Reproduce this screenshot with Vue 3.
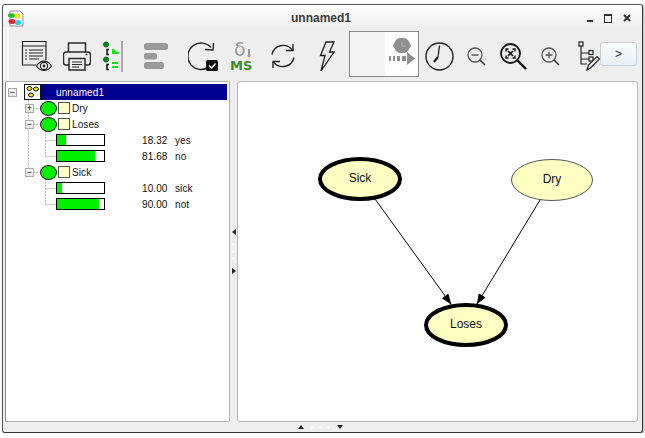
<template>
  <div class="window">
    <header class="titlebar">
      <svg class="app-icon" width="17" height="17" viewBox="0 0 17 17">
        <path d="M3 1h10l3 3v12H3z" fill="#f4f4f4" stroke="#999" />
        <ellipse cx="4.500" cy="5.500" rx="3.500" ry="2.300" fill="#1fc01f" />
        <ellipse cx="10.500" cy="6" rx="3" ry="2.500" fill="#f2e21c" />
        <ellipse cx="5" cy="11.500" rx="3.500" ry="2.500" fill="#e8202a" />
        <ellipse cx="11" cy="12.500" rx="3" ry="2.500" fill="#22d5e0" />
      </svg>
      <span class="title">unnamed1</span>
      <div class="win-controls">
        <span class="win-min"></span>
        <span class="win-max"></span>
        <svg width="8" height="8" viewBox="0 0 8 8"><path d="M1 1l6 6M7 1L1 7" stroke="#333" stroke-width="2" /></svg>
      </div>
    </header>

    <div class="toolbar">
      <svg width="32" height="32" viewBox="0 0 32 32" fill="none" stroke="#222">
        <path d="M25 20V1.500H1.500V25H15" stroke-width="1.200" />
        <path d="M1.500 6h23.500" stroke-width="1.200" />
        <path d="M4 10h2M8 10h14M4 13h2M8 13h14M4 16h2M8 16h14M4 19h2M8 19h10" />
        <path d="M15.500 26c4-6.500 11-6.500 15 0-4 6-11 6-15 0z" fill="#eee" stroke-width="1.200" />
        <circle cx="23" cy="26" r="3.600" stroke-width="1.200" />
        <circle cx="23" cy="26" r="1.400" fill="#222" stroke="none" />
      </svg>
      <svg width="28" height="29" viewBox="0 0 28 29" fill="none" stroke="#2b2b2b" stroke-width="1.500">
        <path d="M5.500 10V1h17v9" />
        <path d="M6 23H3a2.500 2.500 0 0 1-2.500-2.500v-8A2.500 2.500 0 0 1 3 10h22a2.500 2.500 0 0 1 2.500 2.500v8A2.500 2.500 0 0 1 25 23h-3" />
        <rect x="6" y="16.500" width="16" height="11.500" />
        <path d="M9 20h10M9 22.500h10M9 25h7" stroke-width="1" />
        <circle cx="23.500" cy="12.500" r="1" fill="#2b2b2b" stroke="none" />
      </svg>
      <svg width="24" height="31" viewBox="0 0 24 31">
        <circle cx="6" cy="3.500" r="2.500" fill="#0a8a0a" stroke="#063" />
        <circle cx="6" cy="18.500" r="2.500" fill="#0a8a0a" stroke="#063" />
        <path d="M9 8.500H7v5h2M9 23.500H7v5h2" fill="none" stroke="#111" stroke-width="1.500" />
        <path d="M12 8h2l3 3h2v2h-7zM12 21h6v2h-6zM12 25h6v2h-6z" fill="#14e614" />
        <rect x="21" y="0" width="2" height="31" fill="#aaa" />
      </svg>
      <svg width="24" height="26" viewBox="0 0 24 26" fill="#9a9a9a">
        <rect x="0" y="0" width="24" height="7" rx="2.500" />
        <rect x="0" y="10" width="13" height="6.500" rx="2.500" />
        <rect x="0" y="19" width="20" height="7" rx="2.500" />
      </svg>
      <svg width="30" height="29" viewBox="0 0 30 29">
        <path d="M23 5.500A13.200 13.200 0 1 0 19 26" fill="none" stroke="#222" stroke-width="1.400" />
        <path d="M17 7.500l8 .5.500-7" fill="none" stroke="#222" stroke-width="1.400" />
        <rect x="18" y="18" width="12" height="11" rx="1.500" fill="#111" />
        <path d="M21 23.500l2.500 2.500 4-4.500" fill="none" stroke="#fff" stroke-width="1.300" />
      </svg>
      <svg width="32" height="44" viewBox="0 0 32 44">
        <text x="9" y="22" class="delta-text">δ</text>
        <path d="M23 15h2v5.500a1.500 1.500 0 1 1-2 0z" fill="#999" />
        <text x="5" y="36" class="ms-text">MS</text>
      </svg>
      <svg width="26" height="26" viewBox="0 0 26 26" fill="none" stroke="#222" stroke-width="1.400">
        <path d="M2 11.500A11.500 11.500 0 0 1 22 6.500" />
        <path d="M24 14.500A11.500 11.500 0 0 1 4 19.500" />
        <path d="M23 1v6.500h-7M3 25v-6.500h7" />
      </svg>
      <svg width="16" height="31" viewBox="0 0 16 31" fill="none" stroke="#1c1c1c" stroke-width="1.300" stroke-linejoin="miter">
        <path d="M7 1h8l-4.500 10H15L2 30l4-15.500H1.500z" />
      </svg>
      <div class="slider-box">
        <div class="slider-left"></div>
        <div class="slider-right">
          <svg width="28" height="32" viewBox="0 0 28 32" fill="#8f8f8f">
            <path d="M8 2l3-2h6l3 2 3 5.500-3 5.500-3 2h-6l-3-2-3-5.500z" />
            <path d="M14 4v4h4" fill="none" stroke="#b5b5b5" />
            <path d="M1 18h2v5H1zM5 18h2v5H5zM9 18h3v5H9zM14 18h4v5h-4zM19 14l8 6.500-8 6.500z" />
          </svg>
        </div>
      </div>
      <svg width="29" height="29" viewBox="0 0 29 29" fill="none" stroke="#222">
        <circle cx="14.500" cy="14.500" r="13.500" stroke-width="1.400" />
        <path d="M13 15L14.500 3.500" stroke-width="1.300" />
        <path d="M13 15L9 20" stroke-width="2.200" />
      </svg>
      <svg width="19" height="19" viewBox="0 0 19 19" fill="none" stroke="#555">
        <circle cx="8" cy="8" r="7" stroke-width="1.300" />
        <path d="M4.500 8h7" stroke-width="1.300" />
        <path d="M13 13l5 5" stroke="#333" stroke-width="1.600" />
      </svg>
      <svg width="27" height="27" viewBox="0 0 27 27" fill="none" stroke="#111">
        <circle cx="10.500" cy="10.500" r="9.500" stroke-width="1.800" />
        <path d="M8 8l5 5M13 8l-5 5" stroke-width="1.600" />
        <path d="M6 8.500V6h2.500M12.500 6H15v2.500M15 12.500V15h-2.500M8.500 15H6v-2.500" stroke-width="1.400" />
        <path d="M17.500 17.500L26 26" stroke-width="2.400" />
      </svg>
      <svg width="19" height="19" viewBox="0 0 19 19" fill="none" stroke="#555">
        <circle cx="8" cy="8" r="7" stroke-width="1.300" />
        <path d="M4.500 8h7M8 4.500v7" stroke-width="1.300" />
        <path d="M13 13l5 5" stroke="#333" stroke-width="1.600" />
      </svg>
      <svg class="tree-edit" width="22" height="30" viewBox="0 0 22 30" fill="none" stroke="#222" stroke-width="1.200">
        <rect x="1" y="1" width="4" height="4" fill="#eee" />
        <path d="M3 5v18h6M3 12h8M3 18h8" />
        <rect x="11" y="9.500" width="4" height="4" fill="#eee" />
        <rect x="11" y="16" width="4" height="4" fill="#eee" />
        <path d="M9 29l1.500-5L19 15.500l2.500 2.500-8.500 8.500z" fill="#eee" />
      </svg>
      <button class="more-btn">&gt;</button>
    </div>

    <main class="content">
      <section class="tree-panel">
        <svg class="tree-lines" width="224" height="140" viewBox="6 82 224 140">
          <path d="M28.500 100v72M33 108.500h7M33 124.500h7M33 172.500h7M45.500 131v25.500M45.500 140.500H56M45.500 156.500H56M45.500 179v25.500M45.500 188.500H56M45.500 204.500H56" fill="none" stroke="#bbb" stroke-dasharray="2 1" />
        </svg>
        <div class="row root-row">
          <span class="expander">−</span>
          <div class="root-selected">
            <svg class="root-icon" width="17" height="16" viewBox="0 0 17 16">
              <rect x=".5" y=".5" width="16" height="15" fill="#fff" stroke="#111" />
              <ellipse cx="5.500" cy="4.500" rx="2.500" ry="2" fill="#f2e21c" stroke="#111" />
              <ellipse cx="12" cy="5" rx="2.500" ry="2" fill="#f2e21c" stroke="#111" />
              <ellipse cx="7" cy="11" rx="2.500" ry="2" fill="#f2e21c" stroke="#111" />
            </svg>
            <span>unnamed1</span>
          </div>
        </div>
        <template v-for="row in rows" :key="row.key">
          <div v-if="row.name" class="row node-row">
            <span class="expander">{{ row.open ? "−" : "+" }}</span>
            <span class="node-oval"></span>
            <span class="node-box"></span>
            <span class="node-name">{{ row.name }}</span>
          </div>
          <div v-else class="row state-row">
            <span class="bar"><span class="bar-fill" :style="{ width: row.value + '%' }"></span></span>
            <span class="state-value">{{ row.value.toFixed(2) }}</span>
            <span>{{ row.label }}</span>
          </div>
        </template>
      </section>

      <div class="v-split">
        <span class="tri-left"></span>
        <span class="dots-v"><i></i><i></i><i></i></span>
        <span class="tri-right"></span>
      </div>

      <section class="graph-panel">
        <svg class="graph" width="399" height="340" viewBox="238 82 399 340">
          <defs>
            <marker id="head" markerWidth="11" markerHeight="10" refX="10" refY="4" orient="auto" markerUnits="userSpaceOnUse">
              <path d="M0 0L10.500 4L0 8z" fill="#000" />
            </marker>
          </defs>
          <path d="M375 199L451 304" stroke="#000" marker-end="url(#head)" />
          <path d="M540 200L477 304" stroke="#000" marker-end="url(#head)" />
          <ellipse cx="360" cy="179" rx="40" ry="20" class="node-fill" stroke="#000" stroke-width="4" />
          <ellipse cx="552" cy="180" rx="40.500" ry="20.500" class="node-fill" stroke="#555" />
          <ellipse cx="466" cy="325" rx="40" ry="20" class="node-fill" stroke="#000" stroke-width="4" />
          <text x="360" y="182" class="graph-text">Sick</text>
          <text x="552" y="183" class="graph-text">Dry</text>
          <text x="466" y="328" class="graph-text">Loses</text>
        </svg>
      </section>
    </main>

    <div class="h-split">
      <span class="tri-up"></span>
      <span class="dots-h"><i></i><i></i><i></i></span>
      <span class="tri-down"></span>
    </div>
  </div>
</template>

<script setup>
const rows = [
  { key: "dry", name: "Dry", open: false },
  { key: "loses", name: "Loses", open: true },
  { key: "yes", value: 18.32, label: "yes" },
  { key: "no", value: 81.68, label: "no" },
  { key: "sick", name: "Sick", open: true },
  { key: "s1", value: 10, label: "sick" },
  { key: "s2", value: 90, label: "not" },
];
</script>

<style>
html,
body {
  background: #fff;
}
</style>

<style scoped>
.window {
  width: 641px;
  height: 429px;
  margin: 4px 0 0 2px;
  box-sizing: border-box;
  border: 1px solid #555;
  border-right-color: #333;
  border-bottom-color: #333;
  border-radius: 3px;
  background: #eeeeee;
  box-shadow: 1px 1px 3px rgba(0, 0, 0, 0.35);
  display: flex;
  flex-direction: column;
  font-family: "Liberation Sans", sans-serif;
  color: #222;
  overflow: hidden;
}

.titlebar {
  height: 22px;
  flex: none;
  display: flex;
  align-items: center;
  position: relative;
  padding: 4px 0 0 4px;
  box-sizing: border-box;
  background: linear-gradient(#fff, #efefef);
}

.title {
  position: absolute;
  left: 288px;
  top: 6px;
  font-size: 12px;
  font-weight: bold;
  color: #3a3a3a;
}

.win-controls {
  margin-left: auto;
  margin-right: 11px;
  display: flex;
  align-items: center;
  gap: 11px;
}

.win-min {
  width: 6px;
  height: 2px;
  background: #333;
  margin-top: 6px;
}

.win-max {
  width: 6px;
  height: 6px;
  border: 1px solid #333;
  border-top-width: 2px;
}

.toolbar {
  height: 54px;
  flex: none;
  display: grid;
  grid-template-columns: 41px 40px 30px 58px 35px 42px 42px 45px 70px 40px 35px 38px 36px 32px 37px;
  align-items: center;
  justify-items: center;
  padding-left: 13px;
  box-sizing: border-box;
  background: linear-gradient(90deg, #f8f8f8 0 2px, #eee 2px 4px, #f8f8f8 4px 6px, #eee 6px);
}

.toolbar > svg {
  margin-top: 4px;
}

.delta-text {
  font-family: "DejaVu Sans", sans-serif;
  font-size: 19px;
  fill: #999;
}

.ms-text {
  font-family: "DejaVu Sans", sans-serif;
  font-size: 13px;
  font-weight: bold;
  fill: #3f8a2e;
}

.slider-box {
  width: 70px;
  height: 46px;
  box-sizing: border-box;
  border: 1px solid #8a8a8a;
  display: flex;
}

.slider-left {
  width: 35px;
  background: #f4f4f4;
}

.slider-right {
  flex: 1;
  background: #fff;
  display: flex;
  align-items: center;
  justify-content: center;
}

.tree-edit {
  justify-self: end;
}

.more-btn {
  width: 37px;
  height: 24px;
  padding: 0;
  border: 1px solid #ccd0d2;
  border-radius: 3px;
  background: linear-gradient(#fbfcfc, #e6eff4);
  font-family: "Liberation Sans", sans-serif;
  font-size: 12px;
  color: #223;
}

.content {
  flex: 1;
  min-height: 0;
  display: flex;
  padding-left: 2px;
}

.tree-panel {
  width: 225px;
  flex: none;
  position: relative;
  box-sizing: border-box;
  border: 1px solid #b0b0b0;
  border-left-color: #888;
  border-radius: 2px;
  background: #fff;
  padding-top: 2px;
  font-size: 10px;
  letter-spacing: 0.1px;
  color: #111;
}

.tree-lines {
  position: absolute;
  left: 0;
  top: 0;
  pointer-events: none;
}

.row {
  height: 16px;
  display: flex;
  align-items: center;
  position: relative;
}

.expander {
  width: 9px;
  height: 9px;
  box-sizing: border-box;
  border: 1px solid #aaa;
  background: linear-gradient(#fff, #e4e4e4);
  font-size: 9px;
  line-height: 7px;
  text-align: center;
  color: #000;
  flex: none;
}

.root-row {
  padding-left: 2px;
  padding-right: 2px;
}

.root-selected {
  flex: 1;
  height: 16px;
  margin-left: 7px;
  background: #000090;
  color: #fff;
  display: flex;
  align-items: center;
  gap: 15px;
}

.node-row {
  padding-left: 19px;
}

.node-oval {
  width: 17px;
  height: 15px;
  margin-left: 6px;
  box-sizing: border-box;
  border: 1px solid #222;
  border-radius: 50%;
  background: #00f000;
}

.node-box {
  width: 12px;
  height: 12px;
  margin-left: 1px;
  box-sizing: border-box;
  border: 1px solid #555;
  background: #ffffc8;
}

.node-name {
  margin-left: 2px;
}

.state-row {
  padding-left: 50px;
}

.bar {
  width: 49px;
  height: 12px;
  box-sizing: border-box;
  border: 1px solid #000;
  background: #fff;
  flex: none;
}

.bar-fill {
  display: block;
  height: 100%;
  background: #00f000;
}

.state-value {
  width: 33px;
  margin-left: 37px;
}

.v-split {
  width: 7px;
  flex: none;
  display: flex;
  flex-direction: column;
  align-items: center;
  justify-content: center;
  gap: 8px;
}

.dots-v {
  display: flex;
  flex-direction: column;
  gap: 4px;
}

.dots-v i,
.dots-h i {
  display: block;
  width: 3px;
  height: 3px;
  border-radius: 50%;
  background: #f9f9f9;
}

.tri-left,
.tri-right {
  width: 0;
  height: 0;
  border-top: 3px solid transparent;
  border-bottom: 3px solid transparent;
}

.tri-left {
  border-right: 4px solid #222;
}

.tri-right {
  border-left: 4px solid #222;
}

.graph-panel {
  width: 401px;
  flex: none;
  box-sizing: border-box;
  border: 1px solid #b8b8b8;
  border-radius: 3px;
  background: #fff;
}

.graph {
  display: block;
}

.node-fill {
  fill: #ffffc4;
}

.graph-text {
  font-family: "Liberation Sans", sans-serif;
  font-size: 12px;
  text-anchor: middle;
  fill: #111;
}

.h-split {
  height: 10px;
  flex: none;
  display: flex;
  align-items: center;
  gap: 7px;
  padding-left: 295px;
}

.dots-h {
  display: flex;
  gap: 5px;
}

.tri-up,
.tri-down {
  width: 0;
  height: 0;
  border-left: 3px solid transparent;
  border-right: 3px solid transparent;
}

.tri-up {
  border-bottom: 4px solid #222;
}

.tri-down {
  border-top: 4px solid #222;
}
</style>
